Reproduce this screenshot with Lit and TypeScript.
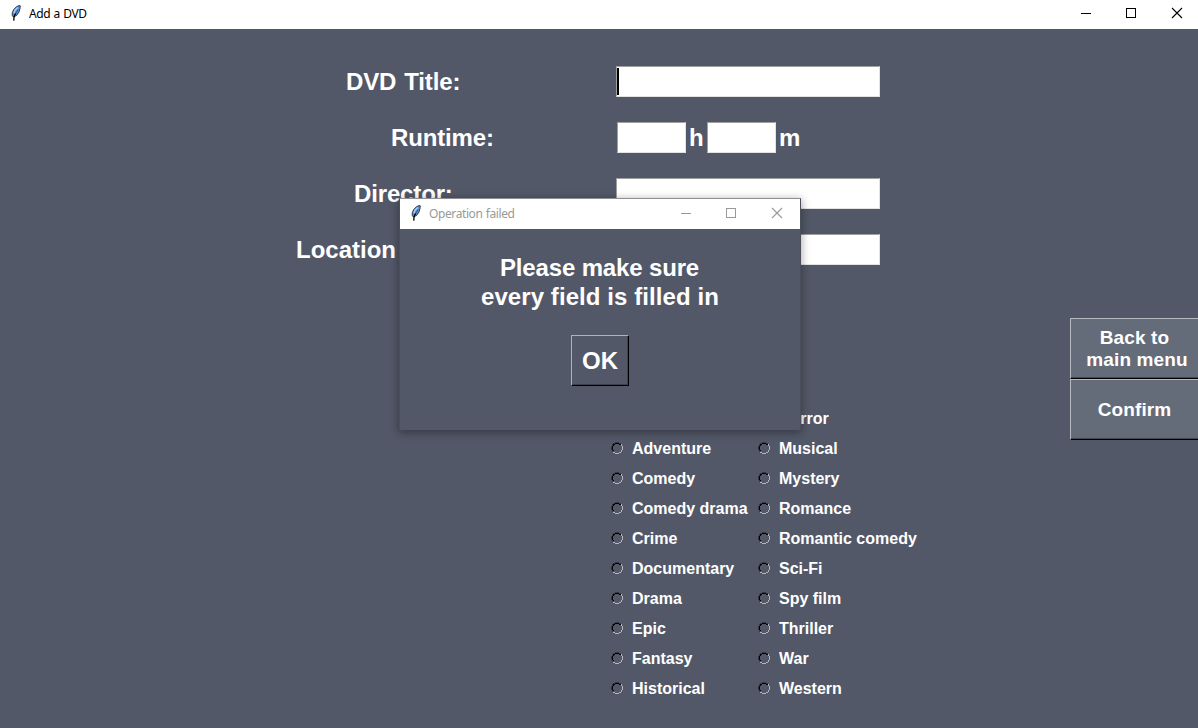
import { LitElement, html, css } from "lit";
import { customElement } from "lit/decorators.js";

const GENRES: [string, string][] = [
  ["Action", "Horror"],
  ["Adventure", "Musical"],
  ["Comedy", "Mystery"],
  ["Comedy drama", "Romance"],
  ["Crime", "Romantic comedy"],
  ["Documentary", "Sci-Fi"],
  ["Drama", "Spy film"],
  ["Epic", "Thriller"],
  ["Fantasy", "War"],
  ["Historical", "Western"],
];

const feather = html`<svg width="10" height="16" viewBox="0 0 10 16">
  <path d="M8.4 .5 L5.6 1.6 L2.8 4.4 L1.3 7.6 L1.2 10.4 L2.4 12 L5.4 10.6 L7.8 7.4 L9 3.6 L9.2 .7Z" fill="#5a96dc" stroke="#1d2430" stroke-width=".9"/>
  <path d="M7 2.4 L4.2 5 L2.8 8.2" stroke="#a9cdf5" stroke-width="1.3" fill="none"/>
  <path d="M4.8 8.4 L3.2 11 L2.7 15.6" stroke="#000" stroke-width="1.3" fill="none"/>
  <path d="M7 4.4 L4.8 8.4" stroke="#1c3f75" stroke-width=".8" fill="none"/>
</svg>`;

const radio = html`<svg width="12" height="12" viewBox="0 0 12 12" shape-rendering="crispEdges">
  <path fill="#343843" d="M4 0h4v1h-4zM2 1h2v1h-2zM8 1h2v1h-2zM1 2h1v2h-1zM0 4h1v4h-1zM1 8h1v2h-1z"/>
  <path fill="#000" d="M4 1h4v1h-4zM2 2h2v1h-2zM8 2h2v1h-2zM2 3h1v1h-1zM1 4h1v4h-1zM2 8h1v1h-1z"/>
  <path fill="#b2b5bc" d="M10 2h1v2h-1zM11 4h1v4h-1zM10 8h1v2h-1zM8 10h2v1h-2zM4 11h4v1h-4zM2 10h2v1h-2z"/>
</svg>`;

@customElement("window-controls")
export class WindowControls extends LitElement {
  static styles = css`
    :host { display: block; height: 28px; width: 136px; }
    svg { display: block; }
  `;
  render() {
    return html`<svg width="136" height="28" viewBox="0 0 136 28" fill="none" stroke="currentColor" shape-rendering="crispEdges">
      <path d="M19 13.5h10"/>
      <rect x="64.5" y="8.5" width="9" height="9"/>
      <path d="M110 8l10 10M120 8l-10 10" shape-rendering="auto" stroke-width="1.1"/>
    </svg>`;
  }
}

@customElement("app-root")
export class AppRoot extends LitElement {
  static styles = css`
    :host { display: block; width: 1198px; height: 728px; overflow: hidden; position: relative; background: #535868; color: #fff; font-family: "Liberation Sans", Arial, sans-serif; font-weight: 700; }
    .bar { display: flex; background: #fff; color: #000; height: 29px; font: 400 12px/16px "Noto Sans", sans-serif; letter-spacing: -.4px; word-spacing: .6px; }
    .icon { width: 18px; padding: 5px 0 0 11px; line-height: 0; }
    .name { flex: 1; padding-top: 6px; white-space: pre; }
    .main { display: flex; height: 699px; }
    .form { width: 1070px; flex: none; padding-top: 25px; box-sizing: border-box; }
    .row { display: flex; height: 56px; align-items: center; font-size: 24px; line-height: 28px; }
    .label { width: 616px; flex: none; box-sizing: border-box; white-space: pre; letter-spacing: -.15px; }
    .title { padding-left: 346px; word-spacing: 1.5px; }
    .runtime { padding-left: 391px; width: 617px; }
    .director { padding-left: 354px; }
    .location { padding-left: 296px; letter-spacing: 0; }
    .entry { width: 264px; height: 31px; margin-bottom: 1px; box-sizing: border-box; background: #fff; border: 1px solid; border-color: #a0a0a0 #e3e3e3 #e3e3e3 #a0a0a0; padding-top: 1px; }
    .short { width: 69px; }
    .caret { width: 2px; height: 27px; background: #000; }
    .unit { width: 21px; box-sizing: border-box; padding-left: 3px; }
    .genres { display: grid; grid-template-columns: 147px 200px; grid-auto-rows: 30px; padding: 125px 0 0 611px; font-size: 16px; }
    .genre { display: flex; align-items: center; gap: 9px; white-space: pre; line-height: 18px; }
    .genre span { padding-top: 2px; }
    .genre svg { flex: none; display: block; }
    .side { width: 128px; flex: none; overflow: hidden; padding-top: 289px; display: flex; flex-direction: column; }
    .btn { flex: none; box-sizing: border-box; width: 136px; height: 61px; background: #656c79; border: 1px solid; border-color: #b5b8bf #000 #000 #b5b8bf; box-shadow: inset 0 -1px #454953; display: flex; flex-direction: column; justify-content: center; text-align: center; font-size: 19px; line-height: 22px; letter-spacing: .12px; white-space: pre; }
    .btn div { padding-right: 7px; }
    .btn .wide { padding-right: 2px; }
    .dialog { position: absolute; left: 399px; top: 198px; width: 402px; height: 232px; box-sizing: border-box; background: #535868; box-shadow: 0 2px 8px 1px rgba(0,0,0,.32); border: 1px solid #4b4f5c; border-bottom: 0; border-top-color: #8d8f95; }
    .dialog .bar { height: 30px; color: #999; }
    .dialog .icon { padding-top: 6px; }
    .dialog .name { padding-top: 7px; }
    .dialog window-controls { padding: 1px 2px 0 0; }
    .msg { padding-top: 24px; font-size: 24px; line-height: 29px; text-align: center; }
    .first { letter-spacing: -.15px; padding-right: 1px; }
    .second { letter-spacing: .08px; }
    .ok { width: 58px; height: 51px; margin: 24px auto 0; box-sizing: border-box; border: 1px solid; border-color: #b0b2b9 #000 #000 #b0b2b9; box-shadow: inset -1px -1px #3d414c; font-size: 24px; line-height: 50px; text-align: center; }
  `;

  bar(name: string) {
    return html`<div class="bar"><div class="icon">${feather}</div><div class="name">${name}</div><window-controls></window-controls></div>`;
  }

  genre(name: string) {
    return html`<div class="genre">${radio}<span>${name}</span></div>`;
  }

  render() {
    return html`
      ${this.bar("Add a DVD")}
      <div class="main">
        <div class="form">
          <div class="row"><div class="label title">DVD Title:</div><div class="entry"><div class="caret"></div></div></div>
          <div class="row"><div class="label runtime">Runtime:</div><div class="entry short"></div><div class="unit">h</div><div class="entry short"></div><div class="unit">m</div></div>
          <div class="row"><div class="label director">Director:</div><div class="entry"></div></div>
          <div class="row"><div class="label location">Location</div><div class="entry"></div></div>
          <div class="genres">${GENRES.map(([a, b]) => [this.genre(a), this.genre(b)])}</div>
        </div>
        <div class="side">
          <div class="btn"><div>Back to</div><div class="wide">main menu</div></div>
          <div class="btn"><div>Confirm</div></div>
        </div>
      </div>
      <div class="dialog">
        ${this.bar("Operation failed")}
        <div class="msg"><div class="first">Please make sure</div><div class="second">every field is filled in</div></div>
        <div class="ok">OK</div>
      </div>`;
  }
}
